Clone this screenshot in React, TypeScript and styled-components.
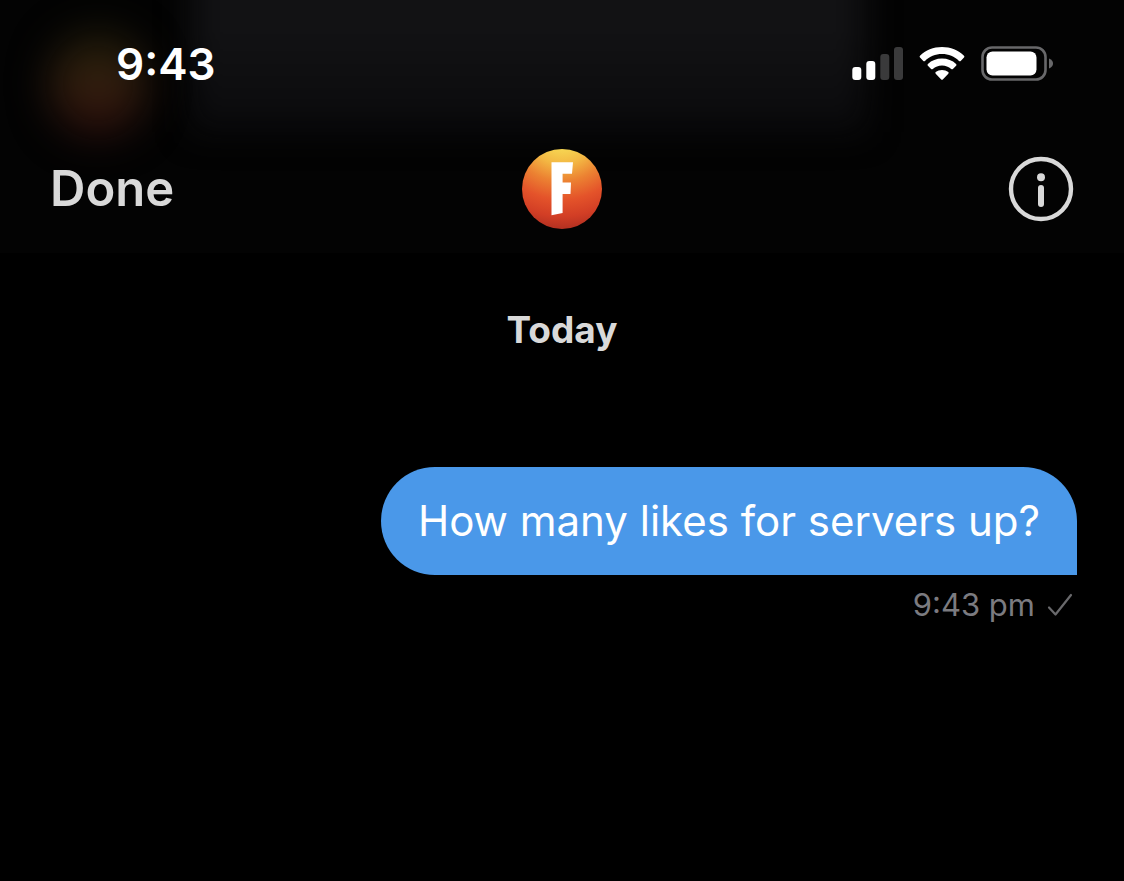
import React from "react";
import styled, { createGlobalStyle } from "styled-components";

const GlobalStyle = createGlobalStyle`
  * { box-sizing: border-box; }
  body {
    margin: 0;
    background: #000;
    color: #d9d9d9;
    font-family: Inter, "Liberation Sans", sans-serif;
  }
`;

const Screen = styled.div`
  display: flex;
  flex-direction: column;
  min-height: 100vh;
`;

const Header = styled.header`
  position: relative;
  overflow: hidden;
  background: #030303;
`;

const PanelGlow = styled.div`
  position: absolute;
  top: -60px;
  left: 17%;
  right: 23%;
  height: 192px;
  background: linear-gradient(#121214 50%, #0a0a0c);
  filter: blur(16px);
`;

const AvatarGlow = styled.div`
  position: absolute;
  top: 32px;
  left: 50px;
  width: 96px;
  height: 104px;
  border-radius: 50%;
  background: linear-gradient(#1b1a08, #34200f 48%, #2a0b0b);
  filter: blur(20px);
`;

const StatusBar = styled.div`
  position: relative;
  display: flex;
  align-items: center;
  justify-content: space-between;
  height: 128px;
  padding: 0 70px 0 116px;
`;

const Clock = styled.time`
  color: #fff;
  font-size: 44px;
  font-weight: 600;
  line-height: 56px;
`;

const StatusIcons = styled.div`
  display: flex;
  align-items: center;
  gap: 16px;
`;

const NavBar = styled.nav`
  position: relative;
  display: grid;
  grid-template-columns: 1fr auto 1fr;
  align-items: center;
  height: 125px;
  padding: 0 50px 4px;
`;

const NavButton = styled.button<{ $align: "start" | "end" }>`
  justify-self: ${(p) => p.$align};
  display: flex;
  padding: 0;
  border: 0;
  background: none;
  color: #d9d9d9;
  font: 600 49px/60px Inter, "Liberation Sans", sans-serif;
  cursor: pointer;
`;

const AvatarButton = styled.button`
  display: flex;
  padding: 0;
  border: 0;
  border-radius: 50%;
  background: none;
  cursor: pointer;
`;

const Conversation = styled.main`
  display: flex;
  flex-direction: column;
  padding: 52px 47px;
`;

const DayLabel = styled.h2`
  margin: 0 0 112px;
  font-size: 37px;
  font-weight: 700;
  line-height: 50px;
  text-align: center;
`;

const Message = styled.article`
  display: flex;
  flex-direction: column;
  align-items: flex-end;
  gap: 10px;
`;

const Bubble = styled.p`
  margin: 0;
  padding: 26px 37px;
  border-radius: 56px 56px 0 56px;
  background: #4a98e9;
  color: #fff;
  font-size: 42px;
  line-height: 56px;
`;

const Meta = styled.div`
  display: flex;
  align-items: center;
  gap: 12px;
  padding-right: 4px;
  color: #7b7b80;
  font-size: 31px;
  line-height: 40px;
`;

const SignalIcon = () => (
  <svg width="52" height="34" viewBox="0 0 52 34" role="img" aria-label="Signal, two of four bars">
    <rect x="1.300" y="20" width="9" height="13" rx="3" fill="#fff" />
    <rect x="15.300" y="14" width="9" height="19" rx="3" fill="#fff" />
    <rect x="29.300" y="7" width="9" height="26" rx="3" fill="#3a3a3b" />
    <rect x="43" y="0" width="9" height="33" rx="3" fill="#3a3a3b" />
  </svg>
);

const WifiIcon = () => (
  <svg width="46" height="34" viewBox="0 0 46 34" role="img" aria-label="Wi-Fi" fill="#fff">
    <path d="M23 0C14.4 0 6.600 3.300 1 8.800q-.9.9 0 1.800l3.300 3.300q.8.800 1.700 0C10.500 9.700 16.400 7.100 23 7.100S35.500 9.700 40 13.900q.9.800 1.700 0L45 10.600q.9-.9 0-1.800C39.400 3.300 31.600 0 23 0Z" />
    <path d="M23 11.600c-5.500 0-10.400 2-14.100 5.300q-.9.900 0 1.800l3.200 3.200q.8.800 1.700 0c2.500-2.100 5.700-3.400 9.200-3.400s6.700 1.300 9.200 3.400q.9.800 1.700 0l3.200-3.200q.9-.9 0-1.800C33.400 13.600 28.500 11.600 23 11.600Z" />
    <path d="M23 22.900c-2.400 0-4.600.8-6.300 2.200q-.8.800 0 1.600l5.500 5.700q.8.800 1.600 0l5.500-5.700q.8-.8 0-1.600C27.600 23.700 25.400 22.900 23 22.900Z" />
  </svg>
);

const BatteryIcon = () => (
  <svg width="73" height="36" viewBox="0 0 73 36" role="img" aria-label="Battery">
    <rect x="1.500" y="1.500" width="63" height="32" rx="9.500" fill="none" stroke="#68686a" strokeWidth="2.600" />
    <rect x="5.500" y="5.500" width="50" height="24" rx="6" fill="#fff" />
    <path d="M68 12.500c3 1.200 4 3 4 5s-1 3.800-4 5Z" fill="#68686a" />
  </svg>
);

const AvatarLogo = () => (
  <svg width="80" height="80" viewBox="0 0 80 80" aria-hidden="true">
    <defs>
      <radialGradient id="avatar-fill" cx="0.5" cy="-0.25" r="1.3">
        <stop offset="0.16" stopColor="#f7dc55" />
        <stop offset="0.34" stopColor="#f3b743" />
        <stop offset="0.5" stopColor="#ec8232" />
        <stop offset="0.68" stopColor="#e4532a" />
        <stop offset="0.84" stopColor="#d23e25" />
        <stop offset="1" stopColor="#a92c20" />
      </radialGradient>
    </defs>
    <circle cx="40" cy="40" r="40" fill="url(#avatar-fill)" />
    <path d="M29.500 13.300 51 13.300 50 24.700 40.600 24.700 40.600 33.500 49 33.500 48.500 45 40.600 45 40.600 64 29.500 66.300Z" fill="#fff" />
  </svg>
);

const InfoIcon = () => (
  <svg width="66" height="66" viewBox="0 0 66 66" fill="none" aria-hidden="true">
    <circle cx="33" cy="33" r="30" stroke="#d9d9d9" strokeWidth="4.400" />
    <circle cx="33" cy="21.300" r="4" fill="#d9d9d9" />
    <path d="M33 32v16" stroke="#d9d9d9" strokeWidth="6" strokeLinecap="round" />
  </svg>
);

const SentIcon = () => (
  <svg width="26" height="24" viewBox="0 0 26 24" fill="none" role="img" aria-label="Sent">
    <path d="M2 14.500 8.500 21.500 24 2" stroke="#69696c" strokeWidth="2.200" strokeLinecap="round" strokeLinejoin="round" />
  </svg>
);

export default function App() {
  return (
    <Screen>
      <GlobalStyle />
      <Header>
        <PanelGlow />
        <AvatarGlow />
        <StatusBar>
          <Clock>9:43</Clock>
          <StatusIcons>
            <SignalIcon />
            <WifiIcon />
            <BatteryIcon />
          </StatusIcons>
        </StatusBar>
        <NavBar>
          <NavButton type="button" $align="start">Done</NavButton>
          <AvatarButton type="button" aria-label="Open profile">
            <AvatarLogo />
          </AvatarButton>
          <NavButton type="button" $align="end" aria-label="Conversation info">
            <InfoIcon />
          </NavButton>
        </NavBar>
      </Header>
      <Conversation>
        <DayLabel>Today</DayLabel>
        <Message>
          <Bubble>How many likes for servers up?</Bubble>
          <Meta>
            <time>9:43 pm</time>
            <SentIcon />
          </Meta>
        </Message>
      </Conversation>
    </Screen>
  );
}
